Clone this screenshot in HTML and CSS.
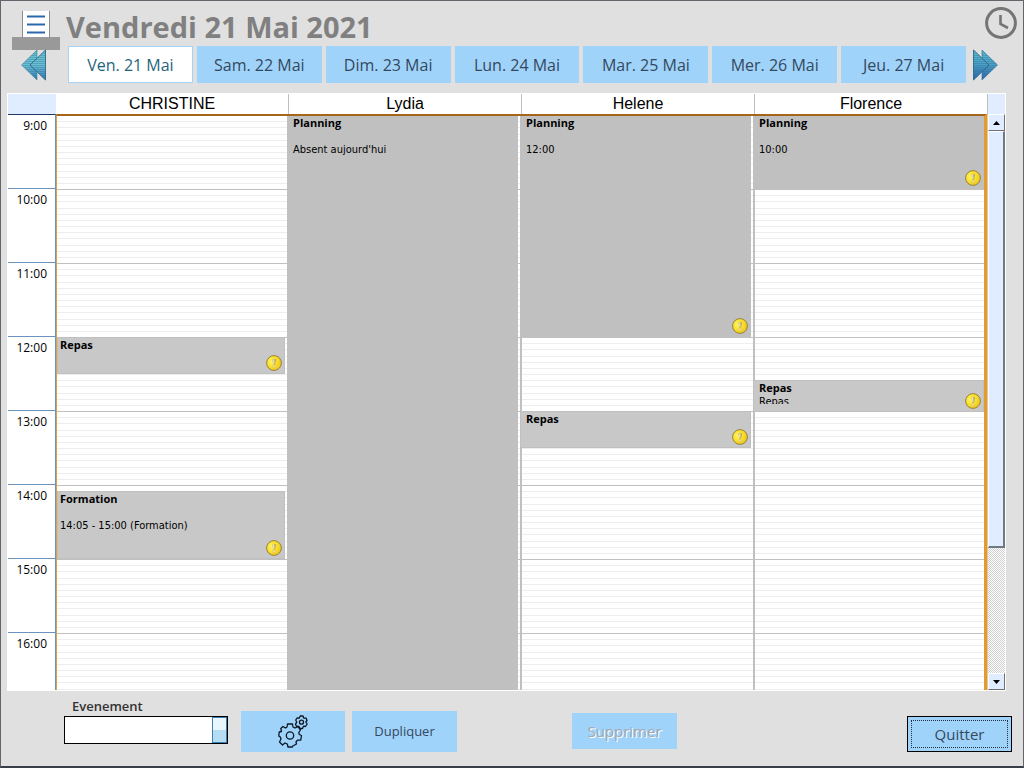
FILE: index.html
```html
<!DOCTYPE html>
<html lang="fr">
<head>
    <meta charset="UTF-8">
    <meta name="viewport" content="width=device-width, initial-scale=1.0">
    <title>Planning</title>
    <link rel="stylesheet" href="styles.css">
</head>
<body>
    <!-- Warning badge and arrow colours, shared -->
    <svg class="defs" width="0" height="0">
        <defs>
            <radialGradient id="gold" cx="35%" cy="40%" r="70%">
                <stop offset="0" stop-color="#fff56a"/>
                <stop offset="0.5" stop-color="#fbe02a"/>
                <stop offset="1" stop-color="#ecc01c"/>
            </radialGradient>
            <linearGradient id="teal" x1="0" y1="0" x2="0" y2="1">
                <stop offset="0" stop-color="#62c3cc"/>
                <stop offset="0.5" stop-color="#6abfd2"/>
                <stop offset="1" stop-color="#2f78b4"/>
            </linearGradient>
            <linearGradient id="blue" x1="0" y1="0" x2="0" y2="1">
                <stop offset="0" stop-color="#5cc0cc"/>
                <stop offset="0.5" stop-color="#4a9cc4"/>
                <stop offset="1" stop-color="#2a62a8"/>
            </linearGradient>
            <pattern id="stripes" width="4" height="2" patternUnits="userSpaceOnUse">
                <rect width="4" height="1" fill="#2a6d96" opacity="0.35"/>
            </pattern>
            <symbol id="badge" viewBox="0 0 16 16">
                <circle cx="8" cy="8" r="7.4" fill="url(#gold)" stroke="#948340" stroke-width="1"/>
                <path d="M6.5 4.5Q8.2 2.8 10 4.5L9.2 9.5H7.2Z" fill="#b3a05a"/>
                <path d="M7 4.6L8.4 4V9H7.4Z" fill="#f2ecc4"/>
                <circle cx="8.2" cy="11.5" r="1.3" fill="#efe6b0" stroke="#c8b458" stroke-width="0.5"/>
            </symbol>
        </defs>
    </svg>

    <div class="window">
        <header class="header">
            <button type="button" class="icon-button print" aria-label="Imprimer">
                <svg width="48" height="39" viewBox="0 0 48 39">
                    <rect x="0" y="26" width="48" height="13" fill="#999"/>
                    <rect x="10" y="0" width="28" height="26" fill="#fff"/>
                    <path d="M10.5 0V26M37.5 0V26" stroke="#8c8c8c"/>
                    <path d="M15 5.5H33M15 13.5H33M15 21.5H33" stroke="#2a68ac" stroke-width="2"/>
                </svg>
            </button>
            <h1>Vendredi 21 Mai 2021</h1>
            <button type="button" class="icon-button clock" aria-label="Horaires">
                <svg width="32" height="32" viewBox="0 0 32 32" fill="none" stroke="#757575">
                    <circle cx="16" cy="16" r="14.4" stroke-width="3"/>
                    <path d="M15.5 8V17L23 21" stroke-width="2.6"/>
                </svg>
            </button>
        </header>

        <nav class="days">
            <button type="button" class="icon-button" aria-label="Semaine précédente">
                <svg width="25" height="32" viewBox="0 0 25 32">
                    <path d="M16 1V31L0.5 16Z" fill="url(#teal)" stroke="#4a8aa0" stroke-width="0.7"/>
                    <path d="M24.5 1V31L9 16Z" fill="url(#teal)" stroke="#2e6884" stroke-width="0.9"/>
                    <path d="M16 1V9L24.5 1V31L16 23V31L0.5 16Z" fill="url(#stripes)"/>
                </svg>
            </button>
            <div class="tabs">
                <button type="button" class="tab active">Ven. 21 Mai</button>
                <button type="button" class="tab">Sam. 22 Mai</button>
                <button type="button" class="tab">Dim. 23 Mai</button>
                <button type="button" class="tab">Lun. 24 Mai</button>
                <button type="button" class="tab">Mar. 25 Mai</button>
                <button type="button" class="tab">Mer. 26 Mai</button>
                <button type="button" class="tab">Jeu. 27 Mai</button>
            </div>
            <button type="button" class="icon-button" aria-label="Semaine suivante">
                <svg width="25" height="32" viewBox="0 0 25 32">
                    <path d="M9 1V31L24.5 16Z" fill="url(#blue)" stroke="#3a7aa0" stroke-width="0.7"/>
                    <path d="M0.5 1V31L16 16Z" fill="url(#blue)" stroke="#2e6884" stroke-width="0.9"/>
                    <path d="M9 1V9L0.5 1V31L9 23V31L24.5 16Z" fill="url(#stripes)"/>
                </svg>
            </button>
        </nav>

        <main class="planning">
            <div class="names">
                <div class="corner"></div>
                <div class="name">CHRISTINE</div>
                <div class="name">Lydia</div>
                <div class="name">Helene</div>
                <div class="name">Florence</div>
                <div class="corner"></div>
            </div>
            <div class="board">
                <div class="hours">
                    <div class="hour">9:00</div>
                    <div class="hour">10:00</div>
                    <div class="hour">11:00</div>
                    <div class="hour">12:00</div>
                    <div class="hour">13:00</div>
                    <div class="hour">14:00</div>
                    <div class="hour">15:00</div>
                    <div class="hour">16:00</div>
                </div>
                <div class="columns">
                    <section class="column">
                        <article class="event meal noon">
                            <h2>Repas</h2>
                            <svg class="badge"><use href="#badge"/></svg>
                        </article>
                        <article class="event meal training">
                            <h2>Formation</h2>
                            <p>14:05 - 15:00 (Formation)</p>
                            <svg class="badge"><use href="#badge"/></svg>
                        </article>
                    </section>
                    <section class="column">
                        <article class="event all-day">
                            <h2>Planning</h2>
                            <p>Absent aujourd'hui</p>
                        </article>
                    </section>
                    <section class="column">
                        <article class="event three-hours">
                            <h2>Planning</h2>
                            <p>12:00</p>
                            <svg class="badge"><use href="#badge"/></svg>
                        </article>
                        <article class="event meal after-one">
                            <h2>Repas</h2>
                            <svg class="badge"><use href="#badge"/></svg>
                        </article>
                    </section>
                    <section class="column">
                        <article class="event one-hour">
                            <h2>Planning</h2>
                            <p>10:00</p>
                            <svg class="badge"><use href="#badge"/></svg>
                        </article>
                        <article class="event meal short">
                            <h2>Repas</h2>
                            <p>Repas</p>
                            <svg class="badge"><use href="#badge"/></svg>
                        </article>
                    </section>
                </div>
                <div class="scrollbar">
                    <button type="button" class="scroll-button" aria-label="Monter">
                        <svg width="7" height="4"><path d="M0 4L3.5 0L7 4Z"/></svg>
                    </button>
                    <div class="track"><div class="thumb"></div></div>
                    <button type="button" class="scroll-button" aria-label="Descendre">
                        <svg width="7" height="4"><path d="M0 0L3.5 4L7 0Z"/></svg>
                    </button>
                </div>
            </div>
        </main>

        <footer class="actions">
            <div class="field">
                <label for="evenement">Evenement</label>
                <select id="evenement" name="evenement">
                    <option value=""></option>
                </select>
            </div>
            <button type="button" class="action settings" aria-label="Paramètres">
                <svg width="30" height="33" viewBox="0 0 30 33" fill="none" stroke="#0c1722" stroke-width="1.3" stroke-linejoin="round">
                    <path d="M9.5 9H14.5L15 12L17 13L20 11.5L22.5 15L20.8 17.5L21.3 19.5L23.5 20.5L22.8 25L19.5 25.2L18 27L18.5 29L14.8 31L14.3 32H10L9.3 29L7 28L4.5 30L1.5 27L3 24L2.3 22L0.8 21L1.2 17L3.5 16.5L2.8 13.5L5 11.5L7.5 13L9 12Z"/>
                    <circle cx="12" cy="20.5" r="3.7"/>
                    <path d="M22.2 1H25L25.7 3L28.2 3.2L29 5.5L27.8 7L29.2 9L27.5 11.5L25.5 11.2L24.5 13.5H22L21 11.5L18.5 11.5L17.5 9L18.8 7.2L17.7 5L19.2 2.8L21.2 3.2Z"/>
                    <circle cx="23.5" cy="7.2" r="2"/>
                </svg>
            </button>
            <button type="button" class="action duplicate">Dupliquer</button>
            <button type="button" class="action delete" disabled>Supprimer</button>
            <button type="button" class="action quit"><span>Quitter</span></button>
        </footer>
    </div>
</body>
</html>
```
FILE: styles.css
```css
* {
    box-sizing: border-box;
}
body {
    margin: 0;
    font-family: "Open Sans", "Noto Sans", sans-serif;
    color: #333;
    background: #e0e0e0;
}
button {
    font-family: inherit;
    padding: 0;
    border: none;
    cursor: pointer;
}
.defs {
    display: block;
    height: 0;
}
.window {
    display: flex;
    flex-direction: column;
    height: 100vh;
    border: 1px solid #66646a;
    border-bottom: 2px solid #3a3e4a;
    background: #e0e0e0;
}
.icon-button {
    background: none;
    line-height: 0;
}

/* Title bar */
.header {
    display: flex;
    align-items: flex-start;
    height: 45px;
    padding: 0 6px 0 11px;
}
.print {
    margin-top: 10px;
}
.header h1 {
    flex: 1;
    margin: 6px 0 0 6px;
    font-size: 29px;
    line-height: 40px;
    color: #808080;
}
.clock {
    margin-top: 6px;
}

/* Day tabs */
.days {
    display: flex;
    align-items: center;
    gap: 7px;
    height: 37px;
    padding: 0 25px 0 20px;
}
.tabs {
    flex: 1;
    display: grid;
    grid-template-columns: repeat(7, 1fr);
    gap: 4px;
    height: 100%;
    margin-left: 15px;
}
.tab {
    font-size: 16px;
    color: #34495e;
    background: #a0d3fa;
}
.tab.active {
    color: #1f6580;
    background: #fff;
    border: 1px solid #a6d3f5;
}

/* Planning board */
.planning {
    flex: 1;
    display: flex;
    flex-direction: column;
    min-height: 0;
    margin: 10px 17px 0 6px;
    border: 1px solid #fff;
    background: #fff;
}
.names {
    display: grid;
    grid-template-columns: 48px repeat(4, 1fr) 17px;
    height: 20px;
}
.corner {
    background: #e0ecff;
}
.name {
    font-family: "Liberation Sans", Arial, sans-serif;
    font-size: 16px;
    line-height: 20px;
    text-align: center;
    color: #000;
    border-right: 1px solid #c0c0c0;
}
.board {
    flex: 1;
    display: flex;
    min-height: 0;
}
.hours {
    width: 48px;
    overflow: hidden;
    border-top: 1px solid #203a68;
    border-right: 1px solid #6f93b8;
}
.hour {
    height: 74px;
    padding: 3px 8px 0 0;
    font-size: 12px;
    line-height: 16px;
    text-align: right;
    color: #000;
    border-bottom: 1px solid #6b93c0;
}
.columns {
    flex: 1;
    display: grid;
    grid-template-columns: 230fr 233fr 233fr 231fr;
    overflow: hidden;
    border-top: 2px solid #a5651a;
    border-left: 1px solid #e0a040;
    border-right: 3px solid #e49a2c;
}
/* One tile is one hour, with a line every five minutes */
.column {
    min-width: 0;
    border-left: 2px solid #c0c0c0;
    background-image: linear-gradient(#c0c0c0 1px, #fff 1px 6px,
        #eee 6px 7px, #fff 7px 12px, #eee 12px 13px, #fff 13px 19px,
        #eee 19px 20px, #fff 20px 25px, #eee 25px 26px, #fff 26px 31px,
        #eee 31px 32px, #fff 32px 37px, #eee 37px 38px, #fff 38px 43px,
        #eee 43px 44px, #fff 44px 49px, #eee 49px 50px, #fff 50px 56px,
        #eee 56px 57px, #fff 57px 62px, #eee 62px 63px, #fff 63px 68px,
        #eee 68px 69px, #fff 69px);
    background-size: 100% 74px;
    background-position: 0 -1px;
}
.column:first-child {
    border-left: none;
}

/* Events */
.event {
    position: relative;
    margin: 0 2px 0 -2px;
    padding: 0 6px;
    overflow: hidden;
    color: #000;
    background: #c0c0c0;
}
.column:first-child .event {
    margin-left: 0;
    padding-left: 2px;
}
.column:last-child .event {
    margin-right: 0;
}
.event h2 {
    margin: 0;
    font-size: 11px;
    line-height: 14px;
}
.event p {
    margin: 13px 0 0;
    font-family: "DejaVu Sans Condensed", "DejaVu Sans", sans-serif;
    font-size: 11px;
    line-height: 14px;
}
.event.meal {
    padding-left: 5px;
    background: #c8c8c8;
    border: 1px solid #c0c0c0;
}
.badge {
    position: absolute;
    right: 3px;
    bottom: 3px;
    width: 16px;
    height: 16px;
}
.meal .badge {
    right: 2px;
    bottom: 2px;
}
.one-hour {
    height: 73px;
}
.three-hours {
    height: 221px;
}
.all-day {
    height: 100%;
}
.event.noon {
    height: 37px;
    margin-top: 221px;
}
.event.training {
    height: 68px;
    margin-top: 117px;
}
.event.after-one {
    height: 37px;
    margin-top: 74px;
}
.event.short {
    height: 32px;
    margin-top: 191px;
}
.event.short p {
    height: 9px;
    margin: 0;
    overflow: hidden;
}

/* Scrollbar */
.scrollbar {
    display: flex;
    flex-direction: column;
    width: 18px;
    border-left: 1px solid #e3c7a0;
}
.scroll-button {
    display: flex;
    align-items: center;
    justify-content: center;
    height: 17px;
    background: #e0ecff;
    border: 1px solid #fff;
    border-right-color: #707070;
    border-bottom-color: #707070;
}
.track {
    flex: 1;
    background: repeating-conic-gradient(#d0d0d0 0 25%, #fff 0 50%) 0 0 / 2px 2px;
}
.thumb {
    height: 77%;
    background: #e0ecff;
    border: 1px solid #fff;
    border-right: 2px solid #707880;
    border-bottom: 2px solid #707880;
}

/* Bottom actions */
.actions {
    display: flex;
    align-items: flex-start;
    height: 75px;
    padding: 5px 11px 0 63px;
}
.field {
    display: flex;
    flex-direction: column;
    width: 164px;
}
.field label {
    padding-left: 8px;
    font-size: 13px;
    font-weight: 600;
    line-height: 20px;
}
.field select {
    appearance: none;
    height: 28px;
    border: 1px solid #000;
    border-radius: 0;
    background: linear-gradient(#e8f6fd 50%, #b4dcf3 50%) right 1px center / 13px 24px no-repeat,
        linear-gradient(#3c7fb1, #3c7fb1) right / 15px 100% no-repeat, #fff;
}
.action {
    width: 105px;
    color: #34495e;
    background: #a0d3fa;
}
.settings {
    width: 104px;
    height: 41px;
    margin: 15px 0 0 13px;
}
.settings svg {
    display: block;
    margin: 0 auto;
}
.duplicate {
    height: 41px;
    margin: 15px 0 0 7px;
    padding-bottom: 2px;
    font-size: 13px;
}
.delete {
    height: 36px;
    margin: 17px 0 0 115px;
    font-size: 15px;
    color: #a0a8b0;
    text-shadow: 1px 1px 0 #fff;
}
.quit {
    height: 36px;
    margin: 20px 0 0 auto;
    padding: 3px;
    font-size: 15px;
    border: 1px solid #000;
}
.quit span {
    display: block;
    line-height: 26px;
    border: 1px dotted #234;
}
```
